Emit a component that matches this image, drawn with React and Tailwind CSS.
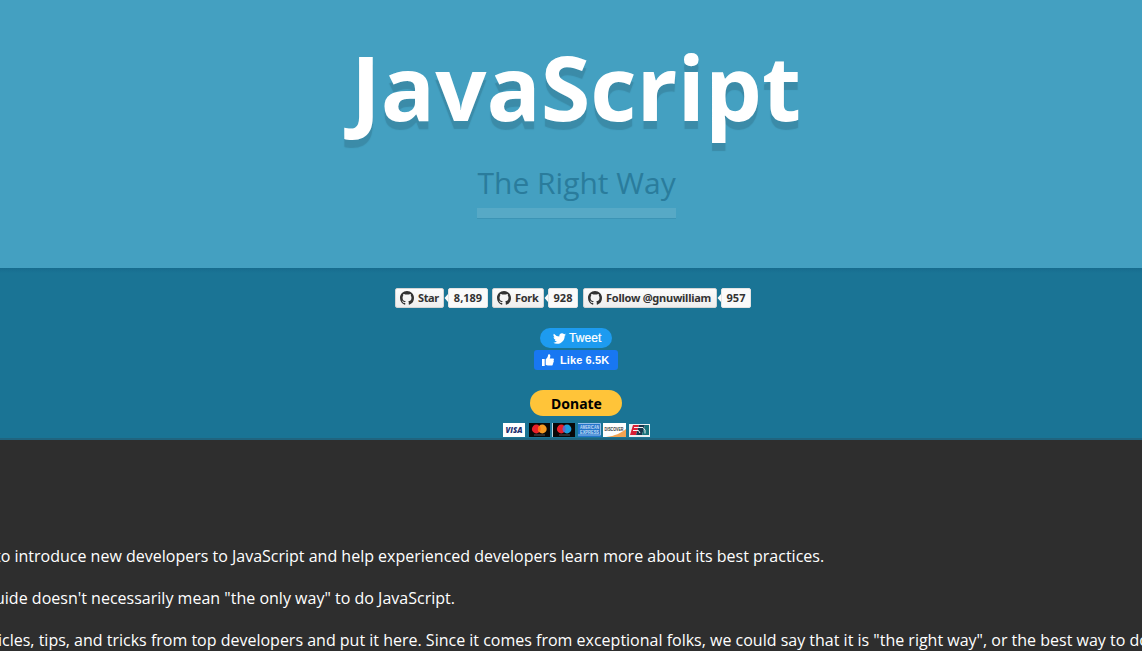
const GITHUB_PATH =
  'M8 0C3.58 0 0 3.58 0 8c0 3.54 2.29 6.53 5.47 7.59.4.07.55-.17.55-.38 0-.19-.01-.82-.01-1.49-2.01.37-2.53-.49-2.69-.94-.09-.23-.48-.94-.82-1.13-.28-.15-.68-.52-.01-.53.63-.01 1.08.58 1.23.82.72 1.21 1.87.87 2.33.66.07-.52.28-.87.51-1.07-1.78-.2-3.64-.89-3.64-3.95 0-.87.31-1.59.82-2.15-.08-.2-.36-1.02.08-2.12 0 0 .67-.21 2.2.82.64-.18 1.32-.27 2-.27s1.36.09 2 .27c1.53-1.04 2.2-.82 2.2-.82.44 1.1.16 1.92.08 2.12.51.56.82 1.27.82 2.15 0 3.07-1.87 3.75-3.65 3.95.29.25.54.73.54 1.48 0 1.07-.01 1.93-.01 2.2 0 .21.15.46.55.38A8.01 8.01 0 0 0 16 8c0-4.42-3.58-8-8-8z';

function GithubButton({ label, count, labelClass, countClass }) {
  return (
    <div className="flex h-5 font-['Noto_Sans',sans-serif] text-[11px] font-bold leading-[18px] text-[#333]">
      <div
        className={`flex h-5 items-center gap-1 rounded-[2px] border border-[#d4d4d4] bg-linear-to-b from-[#fcfcfc] to-[#eee] pl-1 whitespace-nowrap ${labelClass}`}
      >
        <svg viewBox="0 0 16 16" className="size-3.5 shrink-0" fill="#333">
          <path d={GITHUB_PATH} />
        </svg>
        <span>{label}</span>
      </div>
      <svg viewBox="0 0 4 20" className="h-5 w-1 shrink-0" fill="#fafafa">
        <path d="M4 6v8L0.5 10z" />
      </svg>
      <div className={`h-5 rounded-[2px] border border-[#e4e4e4] bg-[#fafafa] text-center ${countClass}`}>{count}</div>
    </div>
  );
}

function PaymentCards() {
  return (
    <svg viewBox="0 0 148 14" className="mt-[7px] h-3.5 w-[148px]">
      <rect x="0" y="0" width="22" height="14" fill="#fff" />
      <text x="11" y="10" textAnchor="middle" textLength="17" lengthAdjust="spacingAndGlyphs" fontFamily="Open Sans, sans-serif" fontWeight="800" fontStyle="italic" fontSize="8" fill="#22306f">VISA</text>
      <rect x="26" y="0" width="21" height="14" fill="#080808" />
      <circle cx="33.3" cy="6" r="4.4" fill="#e8202a" />
      <circle cx="39.3" cy="6" r="4.4" fill="#f59b23" />
      <path d="M36.3 2.8a4.4 4.4 0 0 1 0 6.4a4.4 4.4 0 0 1 0-6.4" fill="#ff6b16" />
      <path d="M31 12h11" stroke="#777" strokeWidth=".7" />
      <rect x="49" y="0" width="1" height="14" fill="#b9d5df" />
      <rect x="50" y="0" width="22" height="14" fill="#080808" />
      <circle cx="58.3" cy="6" r="4.4" fill="#e8202a" />
      <circle cx="64" cy="6" r="4.4" fill="#1d9ddd" />
      <path d="M61.2 2.8a4.4 4.4 0 0 1 0 6.4a4.4 4.4 0 0 1 0-6.4" fill="#705fc1" />
      <path d="M56 12h11" stroke="#777" strokeWidth=".7" />
      <rect x="75" y="0" width="23" height="14" fill="#2475ca" />
      <path d="M75 .5h22.5v11.5H75" fill="none" stroke="#91bdea" />
      <text x="86.5" y="6.4" textAnchor="middle" textLength="19" lengthAdjust="spacingAndGlyphs" fontFamily="Liberation Sans, sans-serif" fontWeight="700" fontSize="4.5" fill="#c4def5">AMERICAN</text>
      <text x="86.5" y="10.7" textAnchor="middle" textLength="19" lengthAdjust="spacingAndGlyphs" fontFamily="Liberation Sans, sans-serif" fontWeight="700" fontSize="4.5" fill="#c4def5">EXPRESS</text>
      <rect x="100" y="0" width="23" height="14" fill="#fff" />
      <path d="M123 6V14h-20c9-1 15-4 20-8" fill="#f3a352" />
      <text x="111" y="7.6" textAnchor="middle" textLength="19" lengthAdjust="spacingAndGlyphs" fontFamily="Liberation Sans, sans-serif" fontWeight="700" fontSize="4.5" fill="#333">DISCOVER</text>
      <rect x="126" y="1" width="21" height="13" fill="#e9f0f2" />
      <path d="M130 2h6l-3 10h-6z" fill="#d81e35" />
      <path d="M136 2h6l-3 10h-6z" fill="#17364c" />
      <path d="M142 2h4v10h-7z" fill="#15717a" />
      <path d="M131 4.500h9l2 2.500v3.500M130 7.500h5.500l1.500 2.500" fill="none" stroke="#f3f3f3" strokeWidth="1" />
    </svg>
  );
}

export default function App() {
  return (
    <div className="flex h-[651px] w-full flex-col overflow-hidden bg-[#2e2e2e] font-['Open_Sans',sans-serif]">
      <header className="flex h-[268px] shrink-0 flex-col items-center bg-[#44a0c1]">
        <h1 className="mt-[25px] ml-[10px] h-[122px] text-[90px] leading-[122px] font-bold whitespace-nowrap text-white [text-shadow:0_8px_1px_#3b8ba8]">
          JavaScript
        </h1>
        <h2 className="mt-[15px] ml-[10px] h-[56px] w-[199px] border-b-10 border-[#57a9c6] pl-px text-center text-[30px] leading-[41px] whitespace-nowrap text-[#2a7c9c] shadow-[0_1px_0_#3c94b5]">
          The Right Way
        </h2>
      </header>

      <section className="flex h-[172px] shrink-0 flex-col items-center border-b-2 border-[#20647f] bg-[#1a7495] bg-linear-to-b from-[#176c8e] to-[#1a7495] to-3% pt-5">
        <div className="ml-1 flex">
          <GithubButton label="Star" count="8,189" labelClass="w-[49px] tracking-[-0.4px]" countClass="w-10" />
          <div className="w-1" />
          <GithubButton label="Fork" count="928" labelClass="w-[52px] tracking-[-0.3px]" countClass="w-[30px]" />
          <div className="w-[5px]" />
          <GithubButton label="Follow @gnuwilliam" count="957" labelClass="w-[134px] tracking-[-0.24px]" countClass="w-[30px]" />
        </div>

        <div className="mt-5 ml-[10px] flex h-5 w-[72px] items-center rounded-full bg-[#1d9bf0] pl-[13px] font-['Liberation_Sans',sans-serif] text-[12px] text-white">
          <svg viewBox="0 0 24 24" className="mr-[3px] size-[13px] shrink-0" fill="#fff">
            <path d="M23.95 4.57a10 10 0 0 1-2.82.77 4.96 4.96 0 0 0 2.16-2.72 9.99 9.99 0 0 1-3.12 1.19 4.92 4.92 0 0 0-8.39 4.48A13.93 13.93 0 0 1 1.64 3.16a4.92 4.92 0 0 0 1.52 6.57 4.9 4.9 0 0 1-2.23-.61v.06a4.92 4.92 0 0 0 3.95 4.83 5 5 0 0 1-2.21.08 4.94 4.94 0 0 0 4.6 3.42A9.87 9.87 0 0 1 0 19.54a13.99 13.99 0 0 0 7.55 2.21c9.05 0 14-7.5 14-13.98 0-.21 0-.42-.02-.63a9.94 9.94 0 0 0 2.46-2.55z" />
          </svg>
          <span className="tracking-[0.1px] [-webkit-text-stroke:0.2px_white]">Tweet</span>
        </div>
        <div className="mt-[2px] ml-[10px] flex h-5 w-[84px] items-center rounded-[3px] bg-[#1877f2] pl-2 font-['Liberation_Sans',sans-serif] text-[11px] font-bold whitespace-nowrap text-white">
          <svg viewBox="0 0 12 12" className="mr-[6px] size-3 shrink-0" fill="#fff">
            <path d="M0 5h2.7v7H0zM3.7 5.2C5.3 4 6 2.5 6.1.8 6.2-.1 8.2-.2 8.3 1.6c.1 1-.2 2-.6 2.8h3.1c1.3 0 1.5 1.5.7 2 .6.7.4 1.5-.2 1.8.3.7.1 1.3-.5 1.6.2 1-.3 1.7-1.3 1.7H6c-1 0-1.6-.4-2.3-.7z" />
          </svg>
          <span className="tracking-[0.1px]">Like 6.5K</span>
        </div>

        <button className="mt-5 ml-[10px] h-[26px] w-[92px] shrink-0 rounded-full bg-[#ffc439] pl-px font-['Noto_Sans',sans-serif] text-[14px] leading-[28px] font-bold text-black">
          Donate
        </button>
        <div className="ml-3">
          <PaymentCards />
        </div>
      </section>

      <main className="flex flex-col gap-[18px] pt-[104px] text-[16px] leading-6 whitespace-nowrap text-white">
        <p className="-ml-[5px]">to introduce new developers to JavaScript and help experienced developers learn more about its best practices.</p>
        <p className="-ml-[5px] tracking-[0.01px]">uide doesn't necessarily mean "the only way" to do JavaScript.</p>
        <p className="-ml-[2px]">icles, tips, and tricks from top developers and put it here. Since it comes from exceptional folks, we could say that it is "the right way", or the best way to do</p>
      </main>
    </div>
  );
}
